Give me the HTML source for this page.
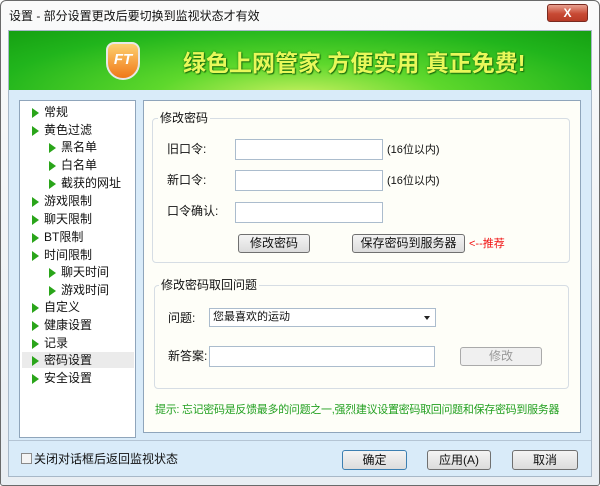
<!DOCTYPE html>
<html><head><meta charset="utf-8"><style>
*{margin:0;padding:0;box-sizing:border-box}
body{width:600px;height:486px;overflow:hidden;background:#fff;font-family:"Liberation Sans","Noto Sans CJK SC",sans-serif;font-size:12px;line-height:14px;color:#111;position:relative}
.a{position:absolute}
.win{left:0;top:0;width:600px;height:486px;background:linear-gradient(#fafafa,#e9eef3);border:1px solid #6a6a6a;border-radius:6px 6px 3px 3px}
.body{left:8px;top:30px;width:584px;height:447px;background:#d9ebf9;border:1px solid #a8b8c8}
.banner{left:9px;top:31px;width:582px;height:59px;background:radial-gradient(ellipse at 50% 110%,#c8f060 0%,#5ed82c 35%,#21b51c 75%,#15a012 100%);overflow:hidden}
.btxt{left:183px;top:50px;font-size:23px;line-height:26px;font-weight:bold;color:#e8f85a;text-shadow:0 0 2px #1f7a10,1px 1px 1px #1a6a0c;white-space:nowrap}
.tree{left:19px;top:100px;width:117px;height:338px;background:#fff;border:1px solid #8fa5bb}
.ti{position:absolute;height:17px;line-height:17px;font-size:12px;white-space:nowrap}
.ti:before{content:"";position:absolute;left:-12px;top:4px;border-left:7px solid #2aa51a;border-top:5px solid transparent;border-bottom:5px solid transparent}
.panel{left:143px;top:100px;width:438px;height:333px;background:#fefef8;border:1px solid #8fa5bb}
.grp{border:1px solid #d6dde4;border-radius:4px}
.glab{background:#fefef8;padding:0 2px;font-size:12px}
.inp{background:#fff;border:1px solid #abbccd;height:21px}
.btn{border:1px solid #707070;border-radius:3px;background:linear-gradient(#f4f4f4,#dcdcdc);text-align:center;font-size:12px;line-height:17px}
</style></head><body>
<div class="a win"></div>
<div class="a" style="left:9px;top:9px;font-size:12px">设置 - 部分设置更改后要切换到监视状态才有效</div>
<div class="a" style="left:547px;top:4px;width:41px;height:18px;border-radius:3px;border:1px solid #7a2a20;background:linear-gradient(#e8a090,#c84a34 55%,#b83a26);color:#fff;font-weight:bold;text-align:center;line-height:16px;font-size:12px">X</div>
<div class="a body"></div>
<div class="a banner"></div>
<div class="a" style="left:106px;top:42px;width:34px;height:38px;border-radius:8px 8px 17px 17px;background:linear-gradient(#fdd070,#f07818);border:2px solid #e8e8e8;color:#fff;font-weight:bold;font-style:italic;font-size:15px;text-align:center;line-height:32px">FT</div>
<div class="a btxt">绿色上网管家 方便实用 真正免费!</div>

<div class="a tree">
<div class="a" style="left:2px;top:251px;width:112px;height:16px;background:#ebebeb"></div>
<div class="ti" style="left:24px;top:3px">常规</div>
<div class="ti" style="left:24px;top:21px">黄色过滤</div>
<div class="ti" style="left:41px;top:38px">黑名单</div>
<div class="ti" style="left:41px;top:56px">白名单</div>
<div class="ti" style="left:41px;top:74px">截获的网址</div>
<div class="ti" style="left:24px;top:92px">游戏限制</div>
<div class="ti" style="left:24px;top:110px">聊天限制</div>
<div class="ti" style="left:24px;top:128px">BT限制</div>
<div class="ti" style="left:24px;top:146px">时间限制</div>
<div class="ti" style="left:41px;top:163px">聊天时间</div>
<div class="ti" style="left:41px;top:181px">游戏时间</div>
<div class="ti" style="left:24px;top:198px">自定义</div>
<div class="ti" style="left:24px;top:216px">健康设置</div>
<div class="ti" style="left:24px;top:234px">记录</div>
<div class="ti" style="left:24px;top:251px">密码设置</div>
<div class="ti" style="left:24px;top:269px">安全设置</div>
</div>

<div class="a panel"></div>
<div class="a grp" style="left:152px;top:118px;width:418px;height:145px"></div>
<div class="a glab" style="left:158px;top:111px">修改密码</div>
<div class="a" style="left:167px;top:142px">旧口令:</div>
<div class="a inp" style="left:235px;top:139px;width:148px"></div>
<div class="a" style="left:387px;top:143px;font-size:11px">(16位以内)</div>
<div class="a" style="left:167px;top:173px">新口令:</div>
<div class="a inp" style="left:235px;top:170px;width:148px"></div>
<div class="a" style="left:387px;top:174px;font-size:11px">(16位以内)</div>
<div class="a" style="left:167px;top:204px">口令确认:</div>
<div class="a inp" style="left:235px;top:202px;width:148px"></div>
<div class="a btn" style="left:238px;top:234px;width:72px;height:19px">修改密码</div>
<div class="a btn" style="left:352px;top:234px;width:113px;height:19px">保存密码到服务器</div>
<div class="a" style="left:469px;top:237px;color:#f01010;font-size:11px">&lt;--推荐</div>

<div class="a grp" style="left:154px;top:285px;width:415px;height:104px"></div>
<div class="a glab" style="left:159px;top:278px">修改密码取回问题</div>
<div class="a" style="left:168px;top:311px">问题:</div>
<div class="a inp" style="left:209px;top:308px;width:227px;height:19px;font-size:11px;line-height:17px;padding-left:3px">您最喜欢的运动<span style="position:absolute;right:5px;top:7px;border-top:4px solid #222;border-left:3px solid transparent;border-right:3px solid transparent"></span></div>
<div class="a" style="left:168px;top:349px">新答案:</div>
<div class="a inp" style="left:209px;top:346px;width:226px;height:21px"></div>
<div class="a btn" style="left:460px;top:347px;width:82px;height:19px;color:#999;border-color:#aaa;background:#f0f0f0">修改</div>

<div class="a" style="left:155px;top:403px;color:#22a020;font-size:11px;letter-spacing:-0.3px;white-space:nowrap">提示: 忘记密码是反馈最多的问题之一,强烈建议设置密码取回问题和保存密码到服务器</div>

<div class="a" style="left:9px;top:440px;width:582px;height:1px;background:#b4c4d4"></div>
<div class="a" style="left:21px;top:453px;width:11px;height:11px;border:1px solid #8a8a8a;background:#f4f4f4"></div>
<div class="a" style="left:34px;top:452px">关闭对话框后返回监视状态</div>
<div class="a btn" style="left:342px;top:450px;width:65px;height:20px;border-color:#3c7fb1;line-height:18px">确定</div>
<div class="a btn" style="left:427px;top:450px;width:64px;height:20px;line-height:18px">应用(A)</div>
<div class="a btn" style="left:512px;top:450px;width:66px;height:20px;line-height:18px">取消</div>
</body></html>
